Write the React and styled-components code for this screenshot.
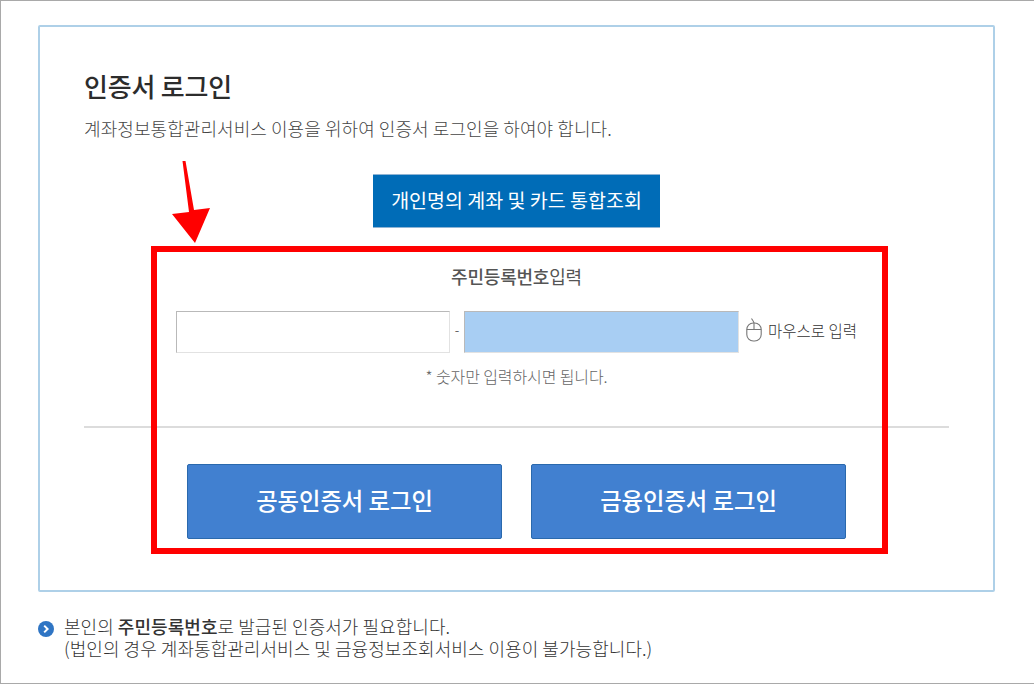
import React from 'react';
import styled, { createGlobalStyle } from 'styled-components';

const GlobalStyle = createGlobalStyle`
  html, body {
    margin: 0;
    padding: 0;
    background: #fff;
  }
  body {
    font-family: "Noto Sans CJK KR", "Noto Sans", sans-serif;
  }
`;

const Page = styled.div`
  position: relative;
  box-sizing: border-box;
  width: 1034px;
  height: 684px;
  padding: 24px 37px 0;
  border: 1px solid #a9a9a9;
  border-right: none;
  overflow: hidden;
`;

const Card = styled.section`
  box-sizing: border-box;
  width: 957px;
  height: 567px;
  padding: 41px 44px 0;
  border: 2px solid #aed0e8;
  border-radius: 2px;
`;

const Title = styled.h1`
  margin: 0;
  font-size: 26px;
  line-height: 36px;
  font-weight: 500;
  letter-spacing: -0.2px;
  color: #2c2c2c;
`;

const Description = styled.p`
  margin: 12px 0 0;
  font-size: 18px;
  line-height: 24px;
  font-weight: 300;
  letter-spacing: 0.07px;
  color: #444;
`;

const LookupRow = styled.div`
  display: flex;
  justify-content: center;
  margin-top: 34px;
`;

const LookupButton = styled.button`
  width: 287px;
  height: 54px;
  padding: 0 0 2px;
  border: none;
  border-top: 1px solid #8fb4d4;
  border-bottom: 1px solid #8fb4d4;
  background: #006cb7;
  color: #fff;
  font: 400 19.5px/26px "Noto Sans CJK KR", sans-serif;
`;

const FieldLabel = styled.div`
  margin-top: 36px;
  text-align: center;
  font-size: 18px;
  line-height: 24px;
  letter-spacing: -0.2px;
  color: #555;

  strong {
    font-weight: 500;
  }
`;

const InputRow = styled.div`
  display: flex;
  align-items: center;
  margin-top: 23px;
  padding-left: 92px;
`;

const NumberInput = styled.div`
  box-sizing: border-box;
  width: ${({ $wide }) => ($wide ? '275px' : '274px')};
  height: 42px;
  border: 1px solid;
  border-color: #b9b9b9 #e2e2e2 #e2e2e2 #b9b9b9;
  background: ${({ $active }) => ($active ? '#a8cef3' : '#fff')};
`;

const Dash = styled.span`
  width: 14px;
  padding-bottom: 5px;
  text-align: center;
  font-size: 13px;
  color: #666;
`;

const MouseLink = styled.span`
  display: flex;
  align-items: center;
  margin-left: 7px;
  padding-bottom: 5px;
  font-size: 15.5px;
  line-height: 20px;
  font-weight: 300;
  color: #333;

  svg {
    margin-right: 6px;
  }
`;

const Hint = styled.div`
  margin-top: 13px;
  text-align: center;
  font-size: 16px;
  line-height: 20px;
  font-weight: 300;
  letter-spacing: -0.1px;
  color: #666;
`;

const Divider = styled.hr`
  margin: 40px 0 0;
  border: none;
  border-top: 2px solid #dcdcdc;
`;

const LoginRow = styled.div`
  display: flex;
  justify-content: center;
  gap: 29px;
  margin-top: 36px;
`;

const LoginButton = styled.button`
  box-sizing: border-box;
  width: 315px;
  height: 75px;
  padding: 0 0 3px;
  border: 1px solid #2a69ad;
  border-radius: 2px;
  background: #4180d0;
  color: #fff;
  font: 500 23.3px/30px "Noto Sans CJK KR", sans-serif;
`;

const Notice = styled.div`
  display: flex;
  align-items: flex-start;
  gap: 10px;
  margin-top: 23px;
  font-size: 18px;
  line-height: 22px;
  font-weight: 300;
  letter-spacing: 0.05px;
  color: #333;

  strong {
    font-weight: 500;
    color: #333;
  }

  svg {
    flex: none;
    margin-top: 6px;
  }
`;

// 빨간 표시는 캡처 위에 얹은 주석이라 absolute로 둔다
const RedBox = styled.div`
  position: absolute;
  left: 150px;
  top: 245px;
  box-sizing: border-box;
  width: 737px;
  height: 308px;
  border: 6px solid #ff0000;
`;

const Arrow = styled.svg`
  position: absolute;
  left: 165px;
  top: 155px;
`;

function MouseIcon() {
  return (
    <svg width="16" height="24" viewBox="0 0 16 24" fill="none" stroke="#777" strokeWidth="1.1">
      <path d="M8 5 C7.5 3 6.5 2 5.5 0.5" />
      <rect x="0.8" y="5" width="14.4" height="18" rx="6.5" />
      <path d="M0.8 11.5 H15.2 M8 5 V11.5" />
    </svg>
  );
}

function BulletIcon() {
  return (
    <svg width="16" height="16" viewBox="0 0 16 16">
      <circle cx="8" cy="8" r="8" fill="#2f75c4" />
      <path d="M6.2 4.6 L9.6 8 L6.2 11.4" fill="none" stroke="#fff" strokeWidth="2" />
    </svg>
  );
}

export default function App() {
  return (
    <Page>
      <GlobalStyle />
      <Card>
        <Title>인증서 로그인</Title>
        <Description>계좌정보통합관리서비스 이용을 위하여 인증서 로그인을 하여야 합니다.</Description>
        <LookupRow>
          <LookupButton>개인명의 계좌 및 카드 통합조회</LookupButton>
        </LookupRow>
        <FieldLabel>
          <strong>주민등록번호</strong>입력
        </FieldLabel>
        <InputRow>
          <NumberInput />
          <Dash>-</Dash>
          <NumberInput $wide $active />
          <MouseLink>
            <MouseIcon />
            마우스로 입력
          </MouseLink>
        </InputRow>
        <Hint>* 숫자만 입력하시면 됩니다.</Hint>
        <Divider />
        <LoginRow>
          <LoginButton>공동인증서 로그인</LoginButton>
          <LoginButton>금융인증서 로그인</LoginButton>
        </LoginRow>
      </Card>
      <Notice>
        <BulletIcon />
        <div>
          본인의 <strong>주민등록번호</strong>로 발급된 인증서가 필요합니다.
          <br />
          (법인의 경우 계좌통합관리서비스 및 금융정보조회서비스 이용이 불가능합니다.)
        </div>
      </Notice>
      <RedBox />
      <Arrow width="48" height="90" viewBox="0 0 48 90">
        <path d="M16.5 5 L19.5 5 L28 54 L44 52 L29 87 L6 58 L23 56 Z" fill="#ff0000" />
      </Arrow>
    </Page>
  );
}
